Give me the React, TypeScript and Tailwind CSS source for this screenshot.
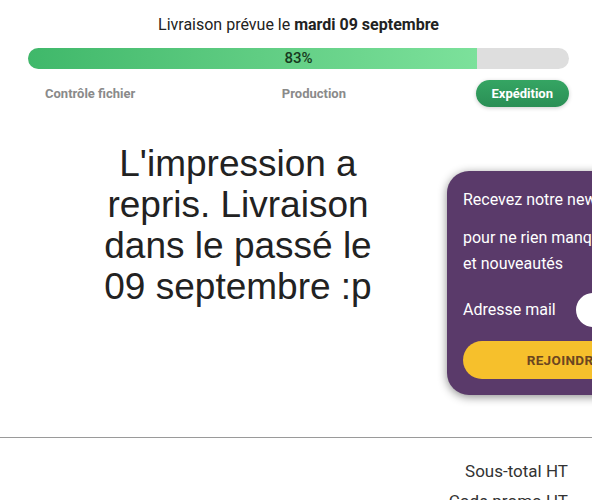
const steps = ["Contrôle fichier", "Production", "Expédition"];

const ProgressHeader = () => {
  const percent = 83;
  return (
    <div className="pl-[28px] pr-[23px] pt-[13px]">
      <h2 className="text-center text-[16px] leading-6 text-[#222]">
        Livraison prévue le <span className="font-bold">mardi 09 septembre</span>
      </h2>
      <div className="relative mt-[11px] h-[21px] w-full overflow-hidden rounded-full bg-[#dedede]">
        <div
          className="h-full bg-gradient-to-r from-[#3fb86a] to-[#7ce19b]"
          style={{ width: `${percent}%` }}
        />
        <span className="absolute inset-0 flex items-center justify-center text-[15px] font-medium text-[#173a20]">
          {percent}%
        </span>
      </div>
      <div className="mt-[11px] flex items-center justify-between">
        {steps.map((step, i) =>
          i === steps.length - 1 ? (
            <span
              key={step}
              className="flex h-[27px] items-center rounded-full bg-gradient-to-b from-[#35a563] to-[#2a8f55] px-4 text-[13px] font-bold text-white shadow-[0_1px_4px_rgba(0,0,0,0.2)]"
            >
              {step}
            </span>
          ) : (
            <span key={step} className="px-[17px] text-[13px] font-bold text-[#8a8a8a]">
              {step}
            </span>
          )
        )}
      </div>
    </div>
  );
};

const Newsletter = () => (
  <div className="mt-[28px] w-[242px] shrink-0 rounded-[22px] bg-[#5a3a6a] px-4 pt-[16px] pb-[16px] text-[16px] leading-[26px] text-white shadow-[0_2px_10px_rgba(0,0,0,0.45)]">
    <p className="whitespace-nowrap">Recevez notre newsletter</p>
    <p className="mt-3 whitespace-nowrap">
      pour ne rien manquer de nos offres
      <br />
      et nouveautés
    </p>
    <div className="mt-4 flex items-center gap-5">
      <span className="whitespace-nowrap">Adresse mail</span>
      <div className="h-[34px] w-[200px] shrink-0 rounded-full bg-white" />
    </div>
    <button className="mt-[14px] h-[38px] w-[202px] rounded-full bg-[#f6c02c] text-[13.5px] font-bold tracking-wide text-[#6b4520]">
      REJOINDRE
    </button>
  </div>
);

export default function App() {
  return (
    <div
      className="h-[500px] w-[592px] overflow-hidden bg-white"
      style={{ fontFamily: "Roboto, 'Liberation Sans', sans-serif" }}
    >
      <ProgressHeader />
      <div className="mt-[36px] flex items-start">
        <div className="flex w-[447px] shrink-0 justify-center pl-[29px]">
          <p
            className="w-[290px] text-center text-[37px] leading-[41px] text-[#222]"
            style={{ fontFamily: "'Liberation Sans', Arial, sans-serif" }}
          >
            L'impression a repris. Livraison dans le passé le 09 septembre :p
          </p>
        </div>
        <Newsletter />
      </div>
      <hr className="mt-[42px] border-[#9a9a9a]" />
      <div className="pr-[24px] pt-[18px] text-right text-[17px] leading-[30px] text-[#333]">
        <p>Sous-total HT</p>
        <p>Code promo HT</p>
      </div>
    </div>
  );
}
